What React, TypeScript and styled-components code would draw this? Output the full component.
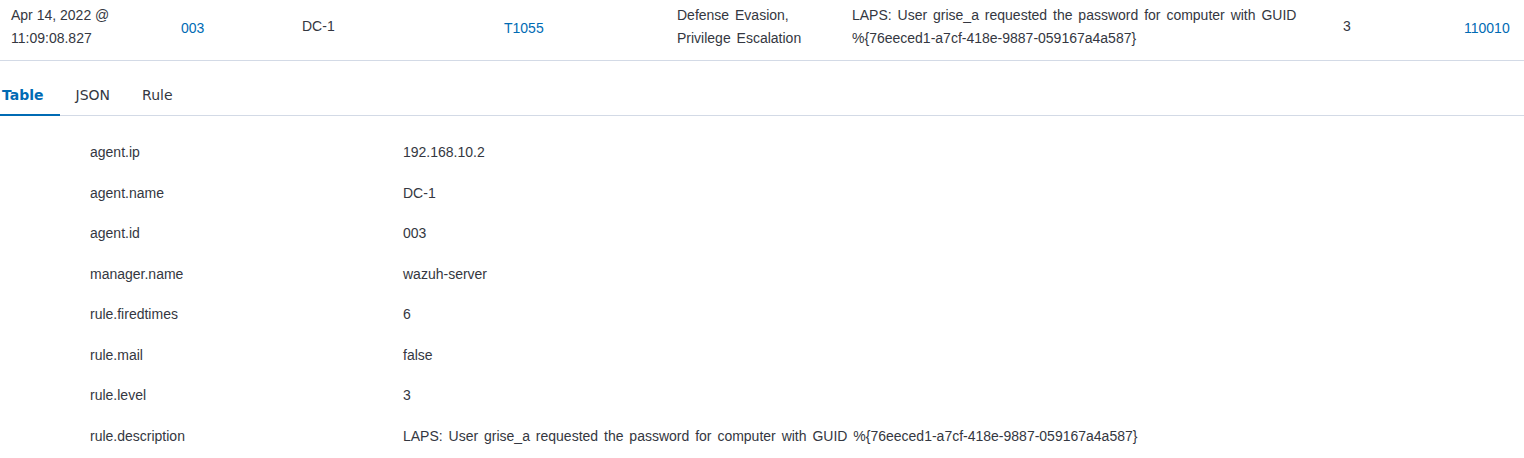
import React from 'react';
import styled, { createGlobalStyle } from 'styled-components';

const Colors = {
  TEXT: '#343741',
  LINK: '#006bb4',
  BORDER: '#d3dae6',
  WHITE: '#ffffff',
};

const GlobalStyle = createGlobalStyle`
  body {
    margin: 0;
    background: ${Colors.WHITE};
    overflow: hidden;
    font-family: 'Liberation Sans', Arial, sans-serif;
    color: ${Colors.TEXT};
  }
`;

const Page = styled.div`
  display: flex;
  flex-direction: column;
  width: 1524px;
`;

const EventRow = styled.div`
  display: grid;
  grid-template-columns: 170px 121px 202px 173px 175px 491px 121px 1fr;
  align-items: center;
  height: 53px;
  padding: 0 0 7px 11px;
  border-bottom: 1px solid ${Colors.BORDER};
  font-size: 14px;
  line-height: 23px;
`;

const Cell = styled.div<{ $wide?: boolean }>`
  color: ${Colors.TEXT};
  word-spacing: ${(p) => (p.$wide ? '2px' : '0')};
`;

const LinkCell = styled.a`
  color: ${Colors.LINK};
  text-decoration: none;
  padding-top: 4px;
`;

const TabBar = styled.div`
  display: flex;
  align-items: flex-end;
  padding-top: 12px;
  border-bottom: 1px solid ${Colors.BORDER};
`;

const TabList = styled.div`
  display: flex;
  margin-left: -14px;
`;

const Tab = styled.button<{ $selected?: boolean }>`
  position: relative;
  height: 42px;
  padding: 0 16px;
  border: none;
  background: none;
  font-family: 'DejaVu Sans', sans-serif;
  font-size: 14px;
  line-height: 44px;
  font-weight: ${(p) => (p.$selected ? 700 : 400)};
  color: ${(p) => (p.$selected ? Colors.LINK : Colors.TEXT)};
  cursor: pointer;

  &::after {
    content: '';
    display: ${(p) => (p.$selected ? 'block' : 'none')};
    position: absolute;
    left: 0;
    right: 0;
    bottom: -1px;
    height: 2px;
    background: ${Colors.LINK};
  }
`;

const DetailTable = styled.div`
  display: flex;
  flex-direction: column;
  padding-top: 16px;
  font-size: 14px;
`;

const DetailRow = styled.div`
  display: grid;
  grid-template-columns: 313px 1fr;
  padding: 8px 0 8px 90px;
  line-height: 24.5px;
  color: ${Colors.TEXT};
  word-spacing: 2px;
`;

const details: [string, string][] = [
  ['agent.ip', '192.168.10.2'],
  ['agent.name', 'DC-1'],
  ['agent.id', '003'],
  ['manager.name', 'wazuh-server'],
  ['rule.firedtimes', '6'],
  ['rule.mail', 'false'],
  ['rule.level', '3'],
  [
    'rule.description',
    'LAPS: User grise_a requested the password for computer with GUID %{76eeced1-a7cf-418e-9887-059167a4a587}',
  ],
];

const App = () => (
  <Page>
    <GlobalStyle />
    <EventRow>
      <Cell>
        Apr 14, 2022 @
        <br />
        11:09:08.827
      </Cell>
      <LinkCell href="#">003</LinkCell>
      <Cell>DC-1</Cell>
      <LinkCell href="#">T1055</LinkCell>
      <Cell $wide>
        Defense Evasion,
        <br />
        Privilege Escalation
      </Cell>
      <Cell $wide>
        LAPS: User grise_a requested the password for computer with GUID
        <br />
        %{'{'}76eeced1-a7cf-418e-9887-059167a4a587{'}'}
      </Cell>
      <Cell>3</Cell>
      <LinkCell href="#">110010</LinkCell>
    </EventRow>
    <TabBar>
      <TabList>
        <Tab $selected>Table</Tab>
        <Tab>JSON</Tab>
        <Tab>Rule</Tab>
      </TabList>
    </TabBar>
    <DetailTable>
      {details.map(([key, value]) => (
        <DetailRow key={key}>
          <span>{key}</span>
          <span>{value}</span>
        </DetailRow>
      ))}
    </DetailTable>
  </Page>
);

export default App;
